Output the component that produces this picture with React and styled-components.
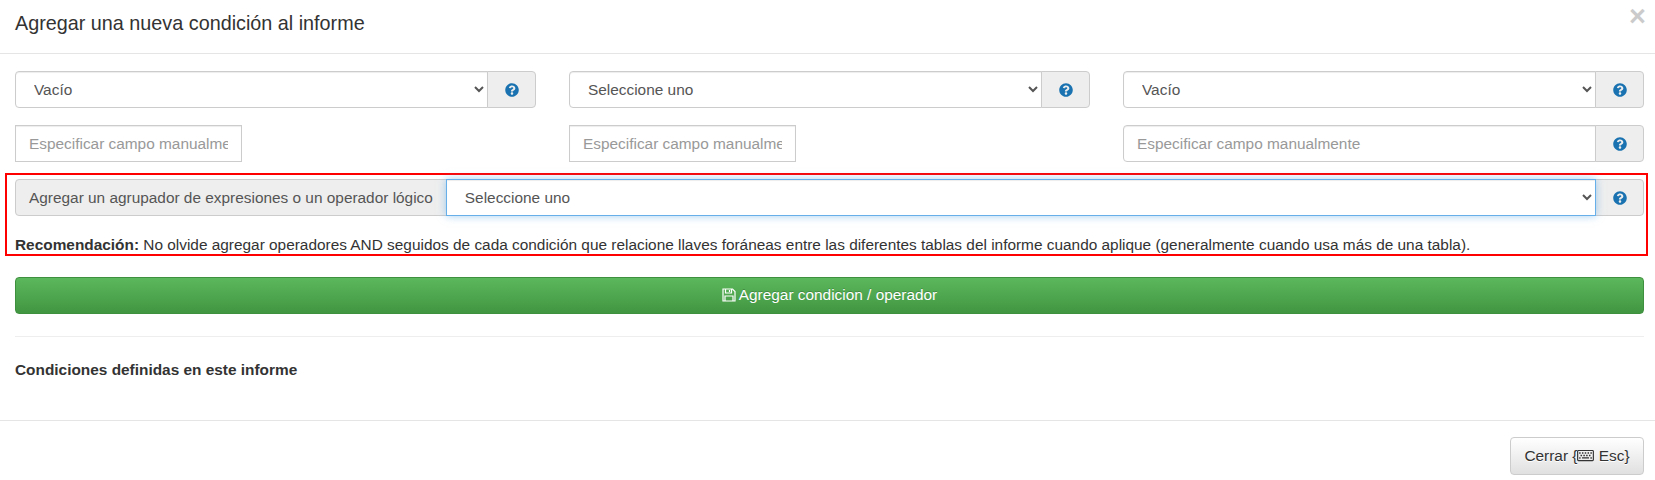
import React from "react";
import styled, { createGlobalStyle } from "styled-components";
import { FaQuestionCircle, FaRegKeyboard } from "react-icons/fa";

const GlobalStyle = createGlobalStyle`
  * { box-sizing: border-box; }
  html, body { margin: 0; background: #fff; }
  body {
    font-family: "Liberation Sans", Arial, sans-serif;
    font-size: 15.4px;
    line-height: 1.42857;
    color: #333;
  }
`;

const Modal = styled.div`
  width: 1655px;
  height: 480px;
  overflow: hidden;
`;

const Header = styled.div`
  position: relative;
  height: 54px;
  padding: 9px 15px 0;
  border-bottom: 1px solid #e5e5e5;
`;

const Title = styled.h4`
  margin: 0;
  font-size: 19.8px;
  font-weight: 500;
  line-height: 28px;
`;

const Close = styled.span`
  position: absolute;
  top: 1px;
  right: 9px;
  font-size: 29px;
  line-height: 30px;
  font-weight: 700;
  color: #000;
  opacity: 0.2;
  text-shadow: 0 1px 0 #fff;
`;

const Body = styled.div`
  padding: 17px 11px 0 15px;
  height: 366px;
`;

const Columns = styled.div`
  display: grid;
  grid-template-columns: repeat(3, 521px);
  column-gap: 33px;
  row-gap: 17px;
`;

const Group = styled.div`
  display: flex;
  width: 100%;
  height: 37px;
`;

const Select = styled.select`
  flex: 1;
  min-width: 0;
  height: 37px;
  padding: 6px 14px;
  font: inherit;
  color: #555;
  background: #fff;
  border: 1px solid ${props => (props.$focused ? "#66afe9" : "#ccc")};
  border-radius: ${props => (props.$focused ? "0" : "4px 0 0 4px")};
  box-shadow: ${props =>
    props.$focused
      ? "inset 0 1px 1px rgba(0,0,0,.075), 0 0 8px rgba(102,175,233,.6)"
      : "inset 0 1px 1px rgba(0,0,0,.075)"};
  position: relative;
  z-index: ${props => (props.$focused ? 2 : 0)};
`;

const Input = styled.input`
  flex: ${props => (props.$grouped ? 1 : "none")};
  width: ${props => (props.$grouped ? "auto" : "227px")};
  min-width: 0;
  height: 37px;
  padding: 6px 13px;
  font: inherit;
  color: #555;
  background: #fff;
  border: 1px solid #ccc;
  border-radius: ${props => (props.$grouped ? "4px 0 0 4px" : "0")};
  box-shadow: inset 0 1px 1px rgba(0,0,0,.075);
  &::placeholder { color: #999; opacity: 1; }
`;

const Addon = styled.span`
  flex: none;
  display: flex;
  align-items: center;
  justify-content: center;
  width: 49px;
  margin-left: -1px;
  background: #eee;
  border: 1px solid #ccc;
  border-radius: 0 4px 4px 0;
  color: #1a73b0;
  font-size: 14px;
`;

const LabelAddon = styled.span`
  flex: none;
  display: flex;
  align-items: center;
  padding: 0 13px;
  margin-right: -1px;
  background: #eee;
  border: 1px solid #ccc;
  border-radius: 4px 0 0 4px;
  color: #555;
  white-space: nowrap;
`;

const Highlight = styled.div`
  margin: 11px -4px 0 -10px;
  height: 83px;
  padding: 4px 2px 0 8px;
  border: 2px solid #f00;
`;

const Advice = styled.p`
  margin: 18px 0 0;
`;

const SaveButton = styled.button`
  display: flex;
  align-items: center;
  justify-content: center;
  gap: 3px;
  width: 100%;
  height: 37px;
  margin-top: 21px;
  padding: 0 0 2px;
  font: inherit;
  color: #fff;
  background: linear-gradient(to bottom, #5cb85c 0, #419641 100%);
  border: 1px solid #3e8f3e;
  border-radius: 4px;
  text-shadow: 0 -1px 0 rgba(0,0,0,.2);
`;

const Rule = styled.hr`
  margin: 22px 0 0;
  border: 0;
  border-top: 1px solid #eee;
`;

const Subtitle = styled.h5`
  margin: 22px 0 0;
  font-size: 15.4px;
  font-weight: 700;
  line-height: 22px;
`;

const Footer = styled.div`
  display: flex;
  justify-content: flex-end;
  padding: 16px 11px 0 0;
  border-top: 1px solid #e5e5e5;
`;

const CloseButton = styled.button`
  height: 38px;
  width: 134px;
  padding: 0;
  font: inherit;
  color: #333;
  background: linear-gradient(to bottom, #fff 0, #e0e0e0 100%);
  border: 1px solid #ccc;
  border-radius: 4px;
  text-shadow: 0 1px 0 #fff;
  white-space: nowrap;
  svg {
    width: 17px;
    height: 15px;
    vertical-align: -2px;
  }
`;

const SaveIcon = () => (
  <svg width="14" height="14" viewBox="0 0 14 14" fill="none" stroke="#fff" strokeWidth="1.2">
    <path d="M1 1h9.5L13 3.5V13H1z" />
    <path d="M3.5 1v4h6V1" />
    <path d="M7.5 2v2" />
    <path d="M3 13V8h8v5" />
  </svg>
);

const Help = () => (
  <Addon>
    <FaQuestionCircle />
  </Addon>
);

const App = () => {
  return (
    <Modal>
      <GlobalStyle />
      <Header>
        <Title>Agregar una nueva condición al informe</Title>
        <Close>×</Close>
      </Header>
      <Body>
        <Columns>
          <Group>
            <Select defaultValue="v">
              <option value="v">Vacío</option>
            </Select>
            <Help />
          </Group>
          <Group>
            <Select defaultValue="s">
              <option value="s">Seleccione uno</option>
            </Select>
            <Help />
          </Group>
          <Group>
            <Select defaultValue="v">
              <option value="v">Vacío</option>
            </Select>
            <Help />
          </Group>
          <Group>
            <Input placeholder="Especificar campo manualmente" />
          </Group>
          <Group>
            <Input placeholder="Especificar campo manualmente" />
          </Group>
          <Group>
            <Input $grouped placeholder="Especificar campo manualmente" />
            <Help />
          </Group>
        </Columns>
        <Highlight>
          <Group>
            <LabelAddon>Agregar un agrupador de expresiones o un operador lógico</LabelAddon>
            <Select $focused defaultValue="s">
              <option value="s">Seleccione uno</option>
            </Select>
            <Help />
          </Group>
          <Advice>
            <strong>Recomendación:</strong> No olvide agregar operadores AND seguidos de cada condición que relacione llaves foráneas entre las diferentes tablas del informe cuando aplique (generalmente cuando usa más de una tabla).
          </Advice>
        </Highlight>
        <SaveButton>
          <SaveIcon /> Agregar condicion / operador
        </SaveButton>
        <Rule />
        <Subtitle>Condiciones definidas en este informe</Subtitle>
      </Body>
      <Footer>
        <CloseButton>
          Cerrar {"{"}<FaRegKeyboard /> Esc{"}"}
        </CloseButton>
      </Footer>
    </Modal>
  );
};

export default App;
